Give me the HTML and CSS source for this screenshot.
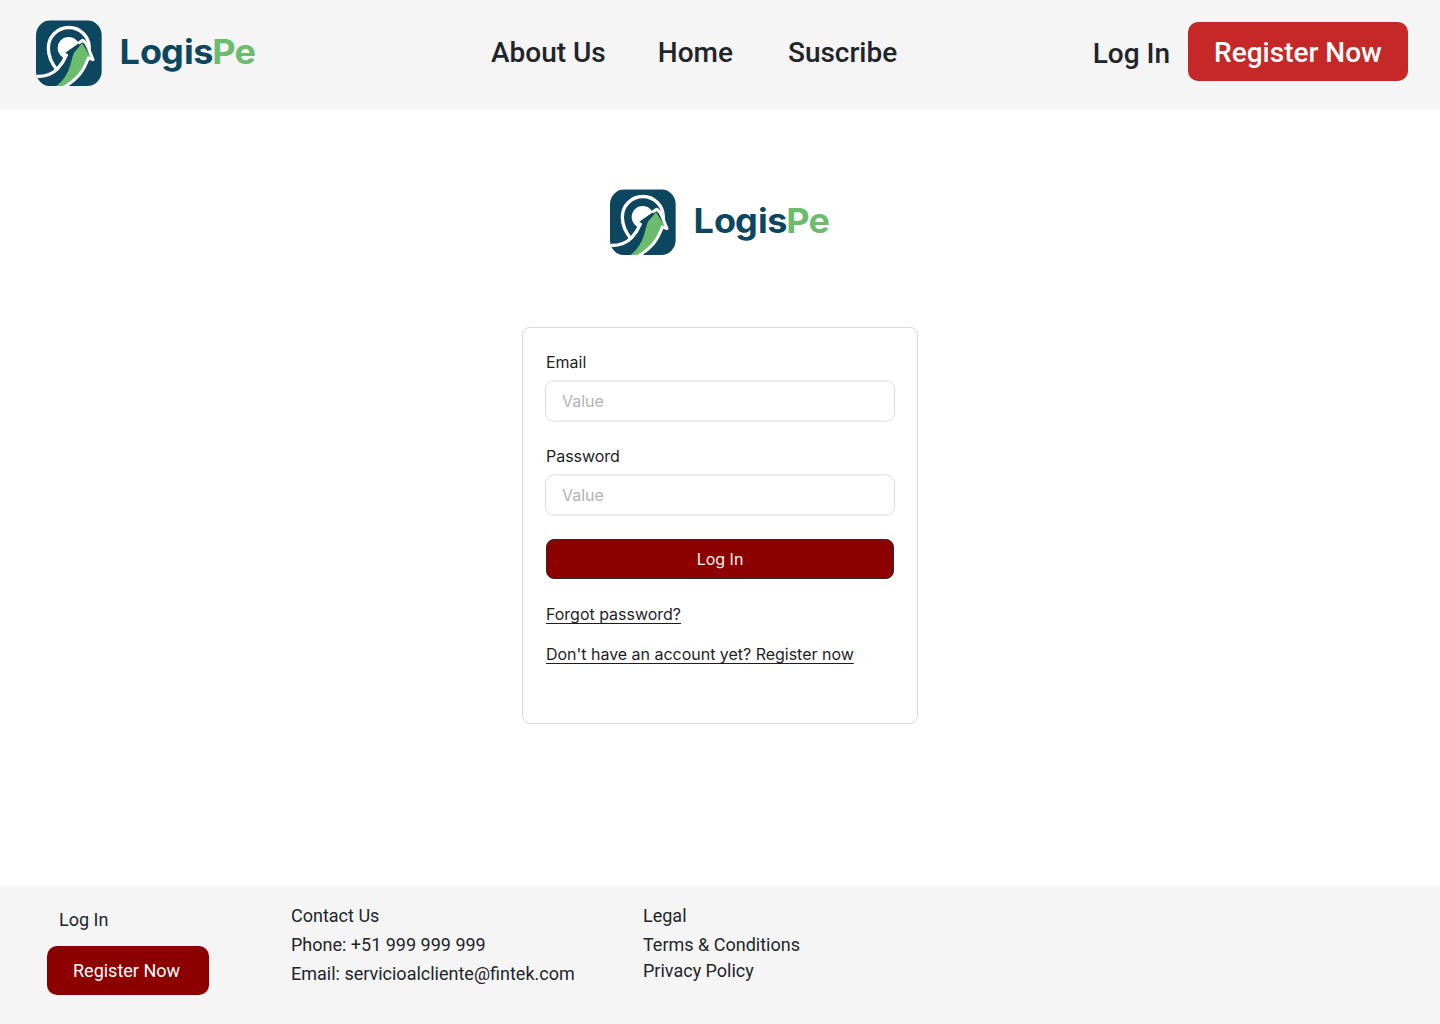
FILE: index.html
```html
<!DOCTYPE html>
<html lang="en">
<head>
<meta charset="utf-8">
<title>LogisPe - Log In</title>
<link rel="stylesheet" href="styles.css">
</head>
<body>
<svg class="sprite" aria-hidden="true">
  <symbol id="mark" viewBox="0 0 240 240">
    <clipPath id="tile"><rect x="18" y="19" width="197" height="197" rx="44"/></clipPath>
    <g clip-path="url(#tile)">
      <rect x="18" y="19" width="198" height="198" fill="#0c465f"/>
      <path d="M81 168 C65 148 55 126 55 102 A61.500 61.500 0 0 1 178 102 V122" fill="none" stroke="#fff" stroke-width="10"/>
      <circle cx="116" cy="102" r="33" fill="#fff"/>
      <path d="M10 187 C42 190 65 183 83 164 C97 149 106 135 114 120 L105 117 L157 80 L186 130 L175 133 C165 176 144 197 106 218 L70 230 L10 230 Z" fill="#0c465f"/>
      <path d="M10 187 C42 190 65 183 83 164 C96 150 104 136 110 121" fill="none" stroke="#fff" stroke-width="10"/>
      <path d="M156 87 L185 134 L175 131 C163 170 140 200 104 220 L74 220 C99 203 113 180 121 153 C127 134 128 120 137 108 Z" fill="#6cbc6e"/>
      <path d="M156 87 L108 117 L123 121 L137 110 Z" fill="#0c465f"/>
      <path d="M145 88 L158 79 C166 84 171 91 174 100 L189 137 L175 132 C161 172 142 196 100 221" fill="none" stroke="#fff" stroke-width="9" stroke-linejoin="round"/>
    </g>
  </symbol>
</svg>

<header class="header">
  <svg class="logo" viewBox="0 0 720 240" role="img" aria-label="LogisPe">
    <use href="#mark" width="240" height="240"/>
    <text class="word" transform="scale(1.06 1)" y="150" x="253.500 311 370.500 436 462">Logis<tspan class="word-pe" x="516 579">Pe</tspan></text>
  </svg>
  <nav class="nav">
    <a>About Us</a>
    <a>Home</a>
    <a>Suscribe</a>
  </nav>
  <div class="account">
    <a class="login">Log In</a>
    <a class="register">Register Now</a>
  </div>
</header>

<main class="main">
  <svg class="logo" viewBox="0 0 720 240" role="img" aria-label="LogisPe">
    <use href="#mark" width="240" height="240"/>
    <text class="word" transform="scale(1.06 1)" y="150" x="253.500 311 370.500 436 462">Logis<tspan class="word-pe" x="516 579">Pe</tspan></text>
  </svg>
  <form class="card">
    <label class="field">Email
      <input type="email" placeholder="Value">
    </label>
    <label class="field">Password
      <input type="password" placeholder="Value">
    </label>
    <button class="submit" type="button">Log In</button>
    <a class="link">Forgot password?</a>
    <a class="link">Don't have an account yet? Register now</a>
  </form>
</main>

<footer class="footer">
  <div class="footer-account">
    <a class="footer-login">Log In</a>
    <a class="footer-register">Register Now</a>
  </div>
  <div class="contact">
    <span>Contact Us</span>
    <span>Phone: +51 999 999 999</span>
    <span>Email: servicioalcliente@fintek.com</span>
  </div>
  <div class="legal">
    <span>Legal</span>
    <a>Terms &amp; Conditions</a>
    <a>Privacy Policy</a>
  </div>
</footer>
</body>
</html>
```
FILE: styles.css
```css
* { box-sizing: border-box; }

body {
  margin: 0;
  height: 1024px;
  display: flex;
  flex-direction: column;
  background: #fff;
  color: #212529;
  font-family: Roboto, sans-serif;
}

.sprite { position: absolute; width: 0; height: 0; }

.logo { display: block; width: 240px; height: 80px; flex: none; }
.word { font: 700 102px Inter, sans-serif; fill: #0c465f; }
.word-pe { fill: #6cbc6e; }

.header {
  height: 110px;
  flex: none;
  display: flex;
  align-items: flex-start;
  padding: 14px 32px 0 30px;
  background: #f5f5f5;
  font-size: 28px;
  font-weight: 500;
  line-height: 33px;
  white-space: nowrap;
}
.nav { display: flex; gap: 52px; margin: 22px 0 0 221px; }
.nav a:last-child { margin-left: 3px; }
.account { display: flex; align-items: flex-start; gap: 18px; margin: 8px 0 0 auto; }
.login { margin-top: 15px; }
.register {
  width: 220px;
  height: 59px;
  padding: 14px 0 12px;
  border-radius: 10px;
  background: #c62828;
  color: #fff;
  text-align: center;
}

.main {
  flex: 1;
  display: flex;
  flex-direction: column;
  align-items: center;
  gap: 64px;
  padding-top: 73px;
}
.main .logo { margin-left: 8px; }

.card {
  width: 396px;
  height: 397px;
  display: flex;
  flex-direction: column;
  align-items: flex-start;
  padding: 23px;
  border: 1px solid #d9d9d9;
  border-radius: 8px;
  color: #1e1e1e;
  font: 16px/22px Inter, sans-serif;
  letter-spacing: -0.02px;
}
.field {
  display: flex;
  flex-direction: column;
  gap: 7px;
  width: 348px;
  margin-bottom: 23px;
}
.field input {
  width: 350px;
  height: 42px;
  margin-left: -1px;
  padding: 0 16px;
  border: solid #ebebeb;
  border-width: 2px 1px;
  border-left-color: #e0e0e0;
  border-right-color: #e0e0e0;
  border-radius: 9px;
  background: #fff;
  font: inherit;
}
.field input::placeholder { color: #b3b3b3; }
.submit {
  width: 348px;
  height: 40px;
  padding: 0;
  border: 1px solid #2c2c2c;
  border-radius: 8px;
  background: #8c0000;
  color: #f5f5f5;
  font: inherit;
}
.link {
  margin-top: 24px;
  text-decoration: underline;
  text-decoration-thickness: 1px;
  text-decoration-skip-ink: none;
  text-underline-offset: 3px;
}
.link + .link { margin-top: 18px; }

.footer {
  height: 138px;
  flex: none;
  display: flex;
  align-items: flex-start;
  padding: 19px 47px 0;
  background: #f5f5f5;
  font-size: 18px;
  line-height: 21px;
  white-space: nowrap;
}
.footer-account { display: flex; flex-direction: column; gap: 16px; width: 244px; padding-top: 4px; }
.footer-login { padding-left: 12px; }
.footer-register {
  width: 162px;
  height: 49px;
  padding: 14px 26px;
  border-radius: 10px;
  background: #8c0000;
  color: #fff;
}
.contact { display: flex; flex-direction: column; gap: 8px; width: 352px; }
.legal { display: flex; flex-direction: column; gap: 5px; }
.legal span { margin-bottom: 3px; }
```
